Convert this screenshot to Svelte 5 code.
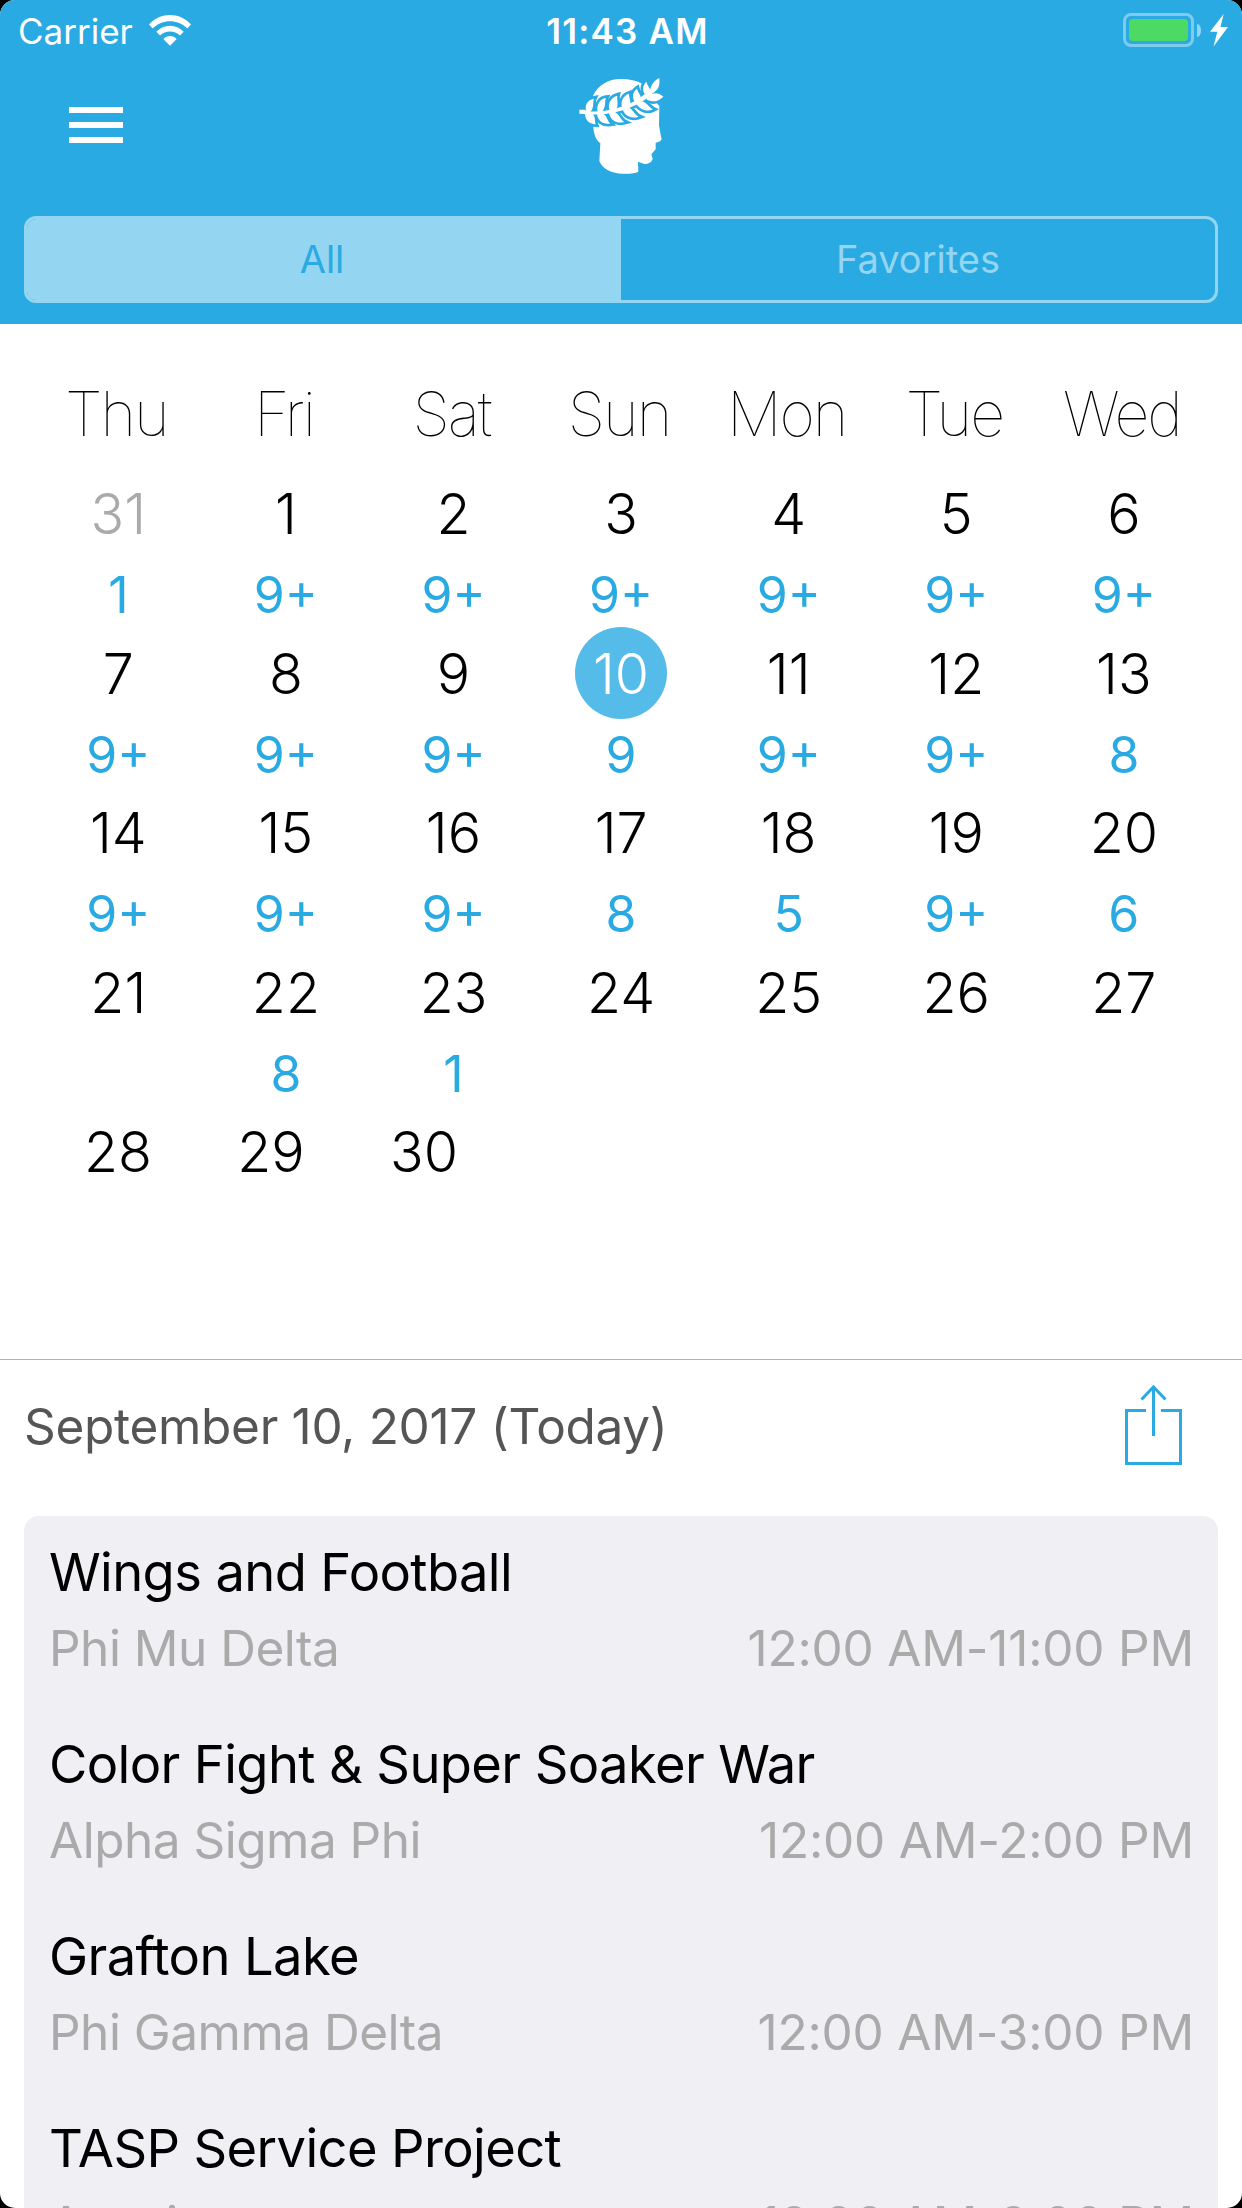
<script>
  const weekdays = ['Thu', 'Fri', 'Sat', 'Sun', 'Mon', 'Tue', 'Wed'];
  const counts = [
    ['1', '9+', '9+', '9+', '9+', '9+', '9+'],
    ['9+', '9+', '9+', '9', '9+', '9+', '8'],
    ['9+', '9+', '9+', '8', '5', '9+', '6'],
    ['', '8', '1', '', '', '', ''],
    ['', '', '']
  ];
  const weeks = counts.map((row, w) =>
    row.map((count, d) => {
      const n = w * 7 + d;
      return { label: n === 0 ? 31 : n, count, muted: n === 0, selected: n === 10 };
    })
  );
  const events = [
    { title: 'Wings and Football', host: 'Phi Mu Delta', time: '12:00 AM-11:00 PM' },
    { title: 'Color Fight & Super Soaker War', host: 'Alpha Sigma Phi', time: '12:00 AM-2:00 PM' },
    { title: 'Grafton Lake', host: 'Phi Gamma Delta', time: '12:00 AM-3:00 PM' },
    { title: 'TASP Service Project', host: 'Acacia', time: '12:00 AM-2:00 PM' }
  ];
</script>

<div class="device">
  <div class="screen">
    <header>
      <div class="status">
        <div class="carrier">
          <span>Carrier</span>
          <svg class="wifi" width="42" height="31" viewBox="0 0 42 31">
            <path d="M0 9.5C11.5-3.1 30.500-3.100 42 9.500L38.300 13.400C28.500 3.700 13.500 3.700 3.700 13.400Z" />
            <path d="M7.300 16.800C14.700 8.700 27.300 8.700 34.700 16.800L31 20.500C25.500 15 16.500 15 11 20.500Z" />
            <path d="M14.300 24C18 20 24 20 27.700 24L21 30.700Z" />
          </svg>
        </div>
        <div class="clock">11:43 AM</div>
        <div class="power">
          <div class="battery"><div class="charge"></div></div>
          <div class="nub"></div>
          <svg class="bolt" width="18" height="33" viewBox="0 0 18 33">
            <path d="M13.700 0L0 17.700H7.300L3.500 32.500L18 13H10.500Z" />
          </svg>
        </div>
      </div>

      <nav>
        <div class="burger"><i></i><i></i><i></i></div>
        <svg class="logo" width="90" height="102" viewBox="110 45 270 306">
          <path
            class="white"
            d="M158 108C172 75 205 57 240 57C268 57 290 62 306 72L352 132L357 138L356 196L360 220L364 238C362 244 354 247 346 248V268L333 283L337 296C334 307 325 312 312 312L293 305L294 335C280 343 240 344 215 336C195 329 183 318 177 303L180 250C168 240 159 225 159 196Z"
          />
          {#each ['outline', 'white'] as layer}
            <g class={layer}>
              <path d="M117 149H132L140 153C185 160 240 145 290 120L330 90L336 104L300 128C255 152 205 167 140 163L117 161Z" />
              <path d="M140 158C130 138 140 120 161 116C156 126 164 142 148 158Z" />
              <path d="M172 158C168 136 176 117 197 114C191 128 200 142 180 160Z" />
              <path d="M210 156C200 136 208 114 231 107C228 122 240 140 219 156Z" />
              <path d="M248 148C238 128 246 108 266 101C265 115 280 134 258 146Z" />
              <path d="M286 130C273 112 277 95 290 86C293 100 310 112 298 128Z" />
              <path d="M317 108C304 92 307 76 318 65C322 80 336 88 328 104Z" />
              <path d="M328 98C330 78 340 62 357 54C358 74 360 88 330 104Z" />
              <path d="M322 112C334 98 352 94 369 110C352 126 336 128 318 118Z" />
              <path d="M134 160C134 180 146 192 166 193C162 180 168 166 150 158Z" />
              <path d="M170 160C172 182 186 194 210 191C200 182 200 164 184 158Z" />
              <path d="M206 158C210 180 228 192 252 186C240 180 236 158 218 154Z" />
              <path d="M246 144C250 166 272 178 295 170C282 164 276 142 258 140Z" />
              <path d="M286 128C296 146 318 158 338 148C326 142 318 124 298 122Z" />
            </g>
          {/each}
        </svg>
      </nav>

      <div class="segments">
        <div class="segment active">All</div>
        <div class="segment">Favorites</div>
      </div>
    </header>

    <section class="calendar">
      <div class="weekdays">
        {#each weekdays as name}<span>{name}</span>{/each}
      </div>
      {#each weeks as week}
        <div class="week" class:short={week.length < 7}>
          {#each week as day}
            <div class="cell">
              <div class="day" class:muted={day.muted} class:selected={day.selected}>{day.label}</div>
              <div class="count">{day.count}</div>
            </div>
          {/each}
        </div>
      {/each}
    </section>

    <section class="agenda">
      <div class="heading">
        <h1>September 10, 2017 (Today)</h1>
        <svg class="share" width="57" height="84" viewBox="0 0 57 84">
          <path d="M21 28.500H1.500V81.500H55.500V28.500H36" />
          <path d="M28.500 54V4M16.500 17.500L28.500 5L40.500 17.500" />
        </svg>
      </div>
      <div class="card">
        {#each events as event}
          <article>
            <h2>{event.title}</h2>
            <div class="meta"><span>{event.host}</span><span class="time">{event.time}</span></div>
          </article>
        {/each}
      </div>
    </section>
  </div>
</div>

<style>
  :global(body) {
    background: #000;
  }
  .device {
    width: 1242px;
    height: 2208px;
    background: #000;
    font-family: Inter, 'Liberation Sans', sans-serif;
    color: #000;
  }
  .screen {
    display: flex;
    flex-direction: column;
    height: 2208px;
    overflow: hidden;
    border-radius: 15px;
    background: #fff;
  }
  header {
    flex: none;
    box-sizing: border-box;
    height: 324px;
    background: #2aaae2;
    color: #fff;
  }
  .status {
    display: grid;
    grid-template-columns: 1fr auto 1fr;
    align-items: center;
    height: 60px;
    padding: 0 14px 0 18px;
    font-size: 35px;
    line-height: 58px;
  }
  .carrier {
    display: flex;
    align-items: center;
    gap: 16px;
  }
  .carrier span {
    padding-top: 2px;
  }
  .wifi,
  .bolt {
    fill: #fff;
  }
  .clock {
    padding: 2px 0 0 9px;
    font-weight: 600;
    letter-spacing: 1.2px;
  }
  .power {
    display: flex;
    align-items: center;
    justify-content: flex-end;
  }
  .battery {
    box-sizing: border-box;
    width: 71px;
    height: 34px;
    padding: 3px;
    border: 3px solid #7fcbee;
    border-radius: 8px;
  }
  .charge {
    height: 22px;
    border-radius: 4px;
    background: #4cd964;
  }
  .nub {
    width: 4px;
    height: 13px;
    margin: 0 9px 0 3px;
    border-radius: 0 4px 4px 0 / 0 6px 6px 0;
    background: #94d5f1;
  }
  nav {
    display: grid;
    grid-template-columns: 1fr 90px 1fr;
    height: 156px;
  }
  .burger {
    display: flex;
    flex-direction: column;
    gap: 9px;
    padding: 47px 0 0 69px;
  }
  .burger i {
    width: 54px;
    height: 6px;
    background: #fff;
  }
  .logo {
    margin: 15px 0 0 1px;
  }
  .white {
    fill: #fff;
  }
  .outline {
    fill: #2aaae2;
    stroke: #2aaae2;
    stroke-width: 16;
    stroke-linejoin: miter;
  }
  .segments {
    box-sizing: border-box;
    display: grid;
    grid-template-columns: 1fr 1fr;
    height: 87px;
    margin: 0 24px;
    overflow: hidden;
    border: 3px solid #94d5f1;
    border-radius: 12px;
    font-size: 38px;
    line-height: 80px;
    text-align: center;
    color: #94d5f1;
  }
  .active {
    padding-right: 4px;
    background: #94d5f1;
    color: #2aaae2;
  }
  .calendar {
    flex: none;
    box-sizing: border-box;
    height: 1036px;
    padding: 50px 34.500px 0;
    border-bottom: 1px solid #b2b2b2;
  }
  .weekdays,
  .week {
    display: grid;
    grid-template-columns: repeat(7, 167.600px);
    text-align: center;
  }
  .weekdays {
    height: 93px;
    font-size: 61px;
    font-weight: 100;
    line-height: 80px;
    letter-spacing: -2px;
  }
  .weekdays span {
    padding-right: 4px;
  }
  .week {
    height: 159.600px;
  }
  .week.short {
    grid-template-columns: repeat(3, 153px);
    padding-left: 7px;
  }
  .day {
    width: 92px;
    height: 92px;
    margin: 0 auto 1px;
    border-radius: 50%;
    font-size: 55.500px;
    font-weight: 300;
    line-height: 93px;
  }
  .muted {
    color: #aaa;
  }
  .selected {
    background: #55bbe9;
    color: #fff;
  }
  .count {
    font-size: 50px;
    line-height: 70px;
    color: #2aaae2;
  }
  .heading {
    display: flex;
    align-items: center;
    justify-content: space-between;
    height: 156px;
    padding: 0 60px 0 24px;
  }
  h1,
  h2 {
    margin: 0;
    font-weight: 400;
    white-space: nowrap;
  }
  h1 {
    padding-bottom: 24px;
    font-size: 49.500px;
    line-height: 60px;
    letter-spacing: -0.3px;
    color: #555;
  }
  .share {
    margin-bottom: 29px;
    fill: none;
    stroke: #2aaae2;
    stroke-width: 3;
  }
  .card {
    margin: 0 24px;
    padding: 20px 24px 0 25px;
    border-radius: 15px 15px 0 0;
    background: #efeff4;
  }
  article {
    height: 192px;
  }
  h2 {
    font-size: 52.500px;
    line-height: 72px;
    letter-spacing: -0.620px;
  }
  .meta {
    display: flex;
    justify-content: space-between;
    font-size: 49.500px;
    line-height: 80px;
    letter-spacing: -0.500px;
    color: #aaa;
  }
  .time {
    letter-spacing: -0.200px;
  }
</style>
